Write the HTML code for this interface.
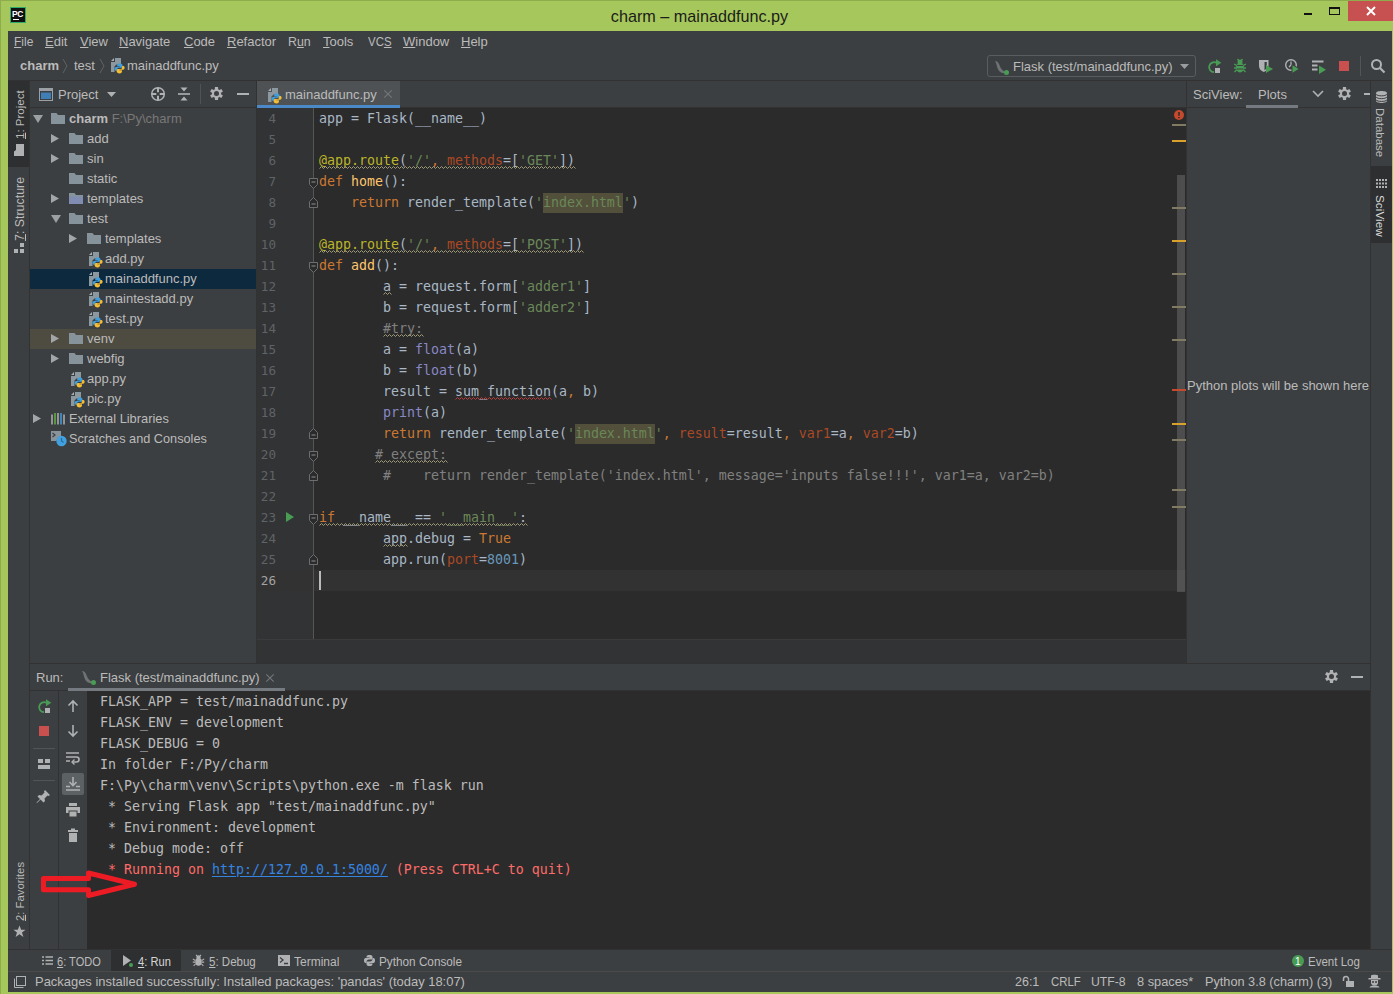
<!DOCTYPE html>
<html><head><meta charset="utf-8"><title>charm – mainaddfunc.py</title>
<style>
*{box-sizing:border-box;margin:0;padding:0}
html,body{width:1393px;height:994px;overflow:hidden}
body{background:#a6c75b;font-family:"Liberation Sans",sans-serif;font-size:13px;color:#bbbbbb;position:relative}
.abs,.abs>*{position:absolute}
.t{position:absolute;white-space:pre;line-height:20px;height:20px}
.vu{transform-origin:0 0;transform:rotate(-90deg)}
.vd{transform-origin:0 0;transform:rotate(90deg)}
.u{text-decoration:underline;text-underline-offset:1px}
svg{position:absolute;overflow:visible}
.mono{font-family:"DejaVu Sans Mono","Liberation Mono",monospace;font-size:13.29px;letter-spacing:0}
#win{position:absolute;left:8px;top:31px;width:1384px;height:961px;background:#3c3f41}
.hl{position:absolute;height:1px;background:#323232}
.vl{position:absolute;width:1px;background:#323232}
/* code */
.ln{position:absolute;left:0;width:1000px;height:21px;line-height:21px;white-space:pre;color:#a9b7c6}
.num{position:absolute;left:256px;width:20px;text-align:right;height:21px;line-height:21px;color:#606366;font-size:12.600px!important}
.k{color:#cc7832}.s{color:#6a8759}.n{color:#6897bb}.d{color:#bbb529}.b{color:#8888c6}.p{color:#aa4926}.c{color:#808080}.f{color:#ffc66d}
.hi{background:#52503a;padding:2px 0 3px}
.con{position:absolute;left:100px;height:21px;line-height:21px;white-space:pre;color:#bbbbbb}
.err{color:#ff6b68}
.row{position:absolute;left:30px;width:226px;height:20px}
</style></head><body>
<!-- window frame -->
<div style="position:absolute;left:0;top:0;width:1393px;height:1px;background:#8fac4d"></div>
<div style="position:absolute;left:0;top:0;width:1px;height:994px;background:#8fac4d"></div>
<div id="titlebar">
  <div style="position:absolute;left:10px;top:7px;width:16px;height:16px;background:#111;border:1px solid #2faa6a"></div>
  <div class="t" style="left:12px;top:9px;font-size:8.500px;font-weight:bold;color:#fff;line-height:10px;height:10px;letter-spacing:-0.300px">PC</div>
  <div style="position:absolute;left:13px;top:19px;width:6px;height:1px;background:#fff"></div>
  <div class="t" style="left:0;width:1399px;text-align:center;top:6px;font-size:16.200px;color:#1c1c1c">charm – mainaddfunc.py</div>
  <div style="position:absolute;left:1304px;top:13px;width:8px;height:2px;background:#111"></div>
  <div style="position:absolute;left:1329px;top:7px;width:11px;height:8px;border:1px solid #111;border-top-width:2px"></div>
  <div style="position:absolute;left:1348px;top:1px;width:45px;height:20px;background:#c75050"></div>
  <svg style="left:1366px;top:6px" width="10" height="10" viewBox="0 0 10 10"><path d="M1 1L9 9M9 1L1 9" stroke="#fff" stroke-width="2"/></svg>
</div>
<div id="win"></div>
<!-- MENU -->
<div id="menu">
  <div class="t" style="transform-origin:0 0;transform:scaleX(0.92);left:14px;top:32px"><span class="u">F</span>ile</div>
  <div class="t" style="left:45px;top:32px"><span class="u">E</span>dit</div>
  <div class="t" style="left:80px;top:32px"><span class="u">V</span>iew</div>
  <div class="t" style="left:119px;top:32px"><span class="u">N</span>avigate</div>
  <div class="t" style="left:184px;top:32px"><span class="u">C</span>ode</div>
  <div class="t" style="left:227px;top:32px"><span class="u">R</span>efactor</div>
  <div class="t" style="transform-origin:0 0;transform:scaleX(0.95);left:288px;top:32px">R<span class="u">u</span>n</div>
  <div class="t" style="left:323px;top:32px"><span class="u">T</span>ools</div>
  <div class="t" style="transform-origin:0 0;transform:scaleX(0.88);left:368px;top:32px">VC<span class="u">S</span></div>
  <div class="t" style="left:403px;top:32px"><span class="u">W</span>indow</div>
  <div class="t" style="left:461px;top:32px"><span class="u">H</span>elp</div>
</div>
<!-- SECTIONS -->
<!-- NAV BAR -->
<div id="nav">
  <div class="t" style="left:20px;top:56px;font-weight:bold">charm</div>
  <svg style="left:62px;top:58px" width="6" height="16" viewBox="0 0 6 16"><path d="M1 1L5 8L1 15" fill="none" stroke="#5e6366" stroke-width="1"/></svg>
  <div class="t" style="left:74px;top:56px">test</div>
  <svg style="left:99px;top:58px" width="6" height="16" viewBox="0 0 6 16"><path d="M1 1L5 8L1 15" fill="none" stroke="#5e6366" stroke-width="1"/></svg>
  <svg style="left:110px;top:57px" width="16" height="16" viewBox="0 0 16 16"><path d="M5 1H11V7.500H6.500L4.500 9.500V15H1V5H5Z" fill="#8c989f"/><path d="M1 4L4 1V4Z" fill="#a4aeb4"/><g transform="translate(4.600 6.400)"><path d="M5 0C3.500 0 2.600 0.600 2.600 1.800V3.200H5.200V3.700H1.600C0.500 3.700 0 4.600 0 5.600C0 6.800 0.600 7.400 1.600 7.400H2.500V6C2.500 5 3.300 4.300 4.300 4.300H6.600C7.400 4.300 7.900 3.700 7.900 3V1.800C7.900 0.600 6.800 0 5 0Z" fill="#3f9fdc"/><path d="M5 10C6.500 10 7.400 9.400 7.400 8.200V6.800H4.800V6.300H8.400C9.500 6.300 10 5.400 10 4.400C10 3.200 9.400 2.600 8.400 2.600H7.500V4C7.500 5 6.700 5.700 5.700 5.700H3.400C2.600 5.700 2.100 6.300 2.100 7V8.200C2.100 9.400 3.200 10 5 10Z" fill="#f5bd33"/></g></svg>
  <div class="t" style="left:127px;top:56px">mainaddfunc.py</div>
  <!-- run config -->
  <div style="position:absolute;left:987px;top:55px;width:209px;height:22px;border:1px solid #5a5d5f;border-radius:3px"></div>
  <svg style="left:993px;top:59px" width="16" height="16" viewBox="0 0 16 16"><path d="M2 2C4 2 5 3 6 5C7 7.5 8 10 10 11.5C11.5 12.5 13 13 14 13C12.5 14.5 10 14.5 8 13.5C5.5 12 4.5 9.5 4 7.5C3.6 5.5 3 3.5 2 2Z" fill="#6e7275"/><circle cx="13.5" cy="13.5" r="2.5" fill="#499c54"/></svg>
  <div class="t" style="left:1013px;top:57px">Flask (test/mainaddfunc.py)</div>
  <svg style="left:1180px;top:64px" width="9" height="5" viewBox="0 0 9 5"><path d="M0 0H9L4.5 5Z" fill="#9a9da0"/></svg>
  <!-- rerun -->
  <svg style="left:1206px;top:58px" width="16" height="16" viewBox="0 0 16 16"><path d="M10.500 4.800A5 5 0 1 0 8 14.200" fill="none" stroke="#499c54" stroke-width="1.800"/><path d="M10 1.200L15.300 4.700L10 8.200Z" fill="#499c54"/><rect x="9" y="10" width="5" height="5" fill="#afb1b3"/></svg>
  <!-- bug -->
  <svg style="left:1232px;top:58px" width="16" height="16" viewBox="0 0 16 16"><ellipse cx="8" cy="9.5" rx="4" ry="5" fill="#499c54"/><circle cx="8" cy="4" r="2.5" fill="#499c54"/><path d="M2.200 6L4.500 7.500M13.800 6L11.500 7.500M2 10H4M14 10H12M2.500 14L4.500 12M13.500 14L11.500 12M5.500 1L7 3M10.500 1L9 3" stroke="#499c54" stroke-width="1.300" fill="none"/><path d="M5 7.5H11M5 11H11" stroke="#3c3f41" stroke-width="1"/></svg>
  <!-- coverage -->
  <svg style="left:1258px;top:58px" width="16" height="16" viewBox="0 0 16 16"><path d="M1 2H10.500V8C10.500 11 8.500 13 5.800 14C3 13 1 11 1 8Z" fill="#afb1b3"/><path d="M6.500 4H8.800V8C8.800 10 8 11.300 6.500 12.200Z" fill="#3c3f41"/><path d="M8 7L15 11L8 15Z" fill="#499c54"/></svg>
  <!-- profile -->
  <svg style="left:1284px;top:58px" width="16" height="16" viewBox="0 0 16 16"><circle cx="7" cy="7" r="5.3" fill="none" stroke="#afb1b3" stroke-width="1.4"/><path d="M7 3.5V7L5 9" fill="none" stroke="#afb1b3" stroke-width="1.3"/><path d="M8 6.5L15.5 11L8 15.5Z" fill="#499c54" stroke="#3c3f41" stroke-width="1"/></svg>
  <!-- run anything -->
  <svg style="left:1311px;top:58px" width="16" height="16" viewBox="0 0 16 16"><path d="M1 3.500H12.500M1 7.500H6.500M1 11.500H6.500" stroke="#afb1b3" stroke-width="1.8"/><path d="M8 7.500L15 11.700L8 16Z" fill="#499c54"/></svg>
  <!-- stop -->
  <div style="position:absolute;left:1339px;top:61px;width:10px;height:10px;background:#c9504f"></div>
  <div class="vl" style="left:1360px;top:56px;height:20px;background:#515557"></div>
  <!-- search -->
  <svg style="left:1370px;top:58px" width="16" height="16" viewBox="0 0 16 16"><circle cx="6.5" cy="6.5" r="4.5" fill="none" stroke="#afb1b3" stroke-width="2"/><path d="M10 10L14.5 14.5" stroke="#afb1b3" stroke-width="2.2"/></svg>
  <div class="hl" style="left:8px;top:80px;width:1384px"></div>
</div>

<!-- LEFT STRIPE -->
<div id="lstripe">
  <div style="position:absolute;left:8px;top:81px;width:21px;height:86px;background:#2d2f30"></div>
  <div class="vl" style="left:29px;top:81px;height:868px"></div>
  <div class="t vu" style="left:10px;top:139px;font-size:11.500px"><span class="u">1</span>: Project</div>
  <svg style="left:13px;top:145px" width="12" height="10" viewBox="0 0 12 10"><path d="M0 0H4.500L6 2H12V10H0Z" fill="#afb1b3" transform="rotate(-90 6 5)"/></svg>
  <div class="t vu" style="left:10px;top:241px;font-size:12.400px"><span class="u">7</span>: Structure</div>
  <svg style="left:14px;top:243px" width="10" height="10" viewBox="0 0 10 10"><rect x="0" y="6" width="4" height="4" fill="#afb1b3"/><rect x="6" y="6" width="4" height="4" fill="#afb1b3"/><rect x="6" y="0" width="4" height="4" fill="#afb1b3"/></svg>
  <div class="t vu" style="left:10px;top:921px;font-size:11.300px"><span class="u">2</span>: Favorites</div>
  <svg style="left:13px;top:925px" width="13" height="13" viewBox="0 0 14 14"><path d="M7 0.500L8.800 5H13.500L9.700 8L11.200 13L7 10L2.800 13L4.300 8L0.500 5H5.200Z" fill="#afb1b3"/></svg>
</div>
<!-- RIGHT STRIPE -->
<div id="rstripe">
  <div class="vl" style="left:1370px;top:81px;height:868px"></div>
  <div style="position:absolute;left:1371px;top:166px;width:21px;height:77px;background:#2d2f30"></div>
  <svg style="left:1376px;top:91px" width="11" height="12" viewBox="0 0 11 12"><path d="M0 2.200C0 -0.700 11 -0.700 11 2.200V9.800C11 12.700 0 12.700 0 9.800Z" fill="#afb1b3"/><path d="M0 3.200C1.500 5.400 9.500 5.400 11 3.200M0 6C1.500 8.200 9.500 8.200 11 6M0 8.800C1.500 11 9.500 11 11 8.800" fill="none" stroke="#3c3f41" stroke-width="1"/></svg>
  <div class="t vd" style="left:1390px;top:108px;font-size:11.500px">Database</div>
  <svg style="left:1376px;top:179px" width="11" height="9" viewBox="0 0 11 9"><path d="M0 1H2M3 1H5M6 1H8M9 1H11M0 4.500H2M3 4.500H5M6 4.500H8M9 4.500H11M0 8H2M3 8H5M6 8H8M9 8H11" stroke="#afb1b3" stroke-width="2"/></svg>
  <div class="t vd" style="left:1390px;top:195px;font-size:11.800px;color:#d8d8d8">SciView</div>
</div>
<!-- PROJECT PANEL -->
<div id="project">
  <svg style="left:39px;top:88px" width="14" height="13" viewBox="0 0 14 13"><rect x="0.5" y="0.5" width="13" height="12" fill="none" stroke="#9aa0a4"/><rect x="0" y="0" width="14" height="3" fill="#9aa0a4"/><rect x="2" y="4.5" width="10" height="6.500" fill="#3f7fb5"/></svg>
  <div class="t" style="left:58px;top:85px">Project</div>
  <svg style="left:107px;top:92px" width="9" height="5" viewBox="0 0 9 5"><path d="M0 0H9L4.5 5Z" fill="#afb1b3"/></svg>
  <svg style="left:150px;top:86px" width="16" height="16" viewBox="0 0 16 16"><circle cx="8" cy="8" r="6.300" fill="none" stroke="#afb1b3" stroke-width="1.500"/><path d="M8 1.500V6.300M8 9.700V14.500M1.500 8H6.300M9.700 8H14.500" stroke="#afb1b3" stroke-width="2"/></svg>
  <svg style="left:176px;top:86px" width="16" height="16" viewBox="0 0 16 16"><path d="M2 8H14" stroke="#afb1b3" stroke-width="1.600"/><path d="M4.500 1.500H11.500L8 5.500Z" fill="#afb1b3"/><path d="M4.500 14.500H11.500L8 10.500Z" fill="#afb1b3"/></svg>
  <div class="vl" style="left:200px;top:84px;height:20px;background:#505355"></div>
  <svg style="left:208px;top:85px" width="17" height="17" viewBox="0 0 17 17"><path d="M6.81 4.22L6.94 1.99L10.06 1.99L10.19 4.22L11.36 4.90L13.36 3.89L14.92 6.60L13.05 7.83L13.05 9.17L14.92 10.40L13.36 13.11L11.36 12.10L10.19 12.78L10.06 15.01L6.94 15.01L6.81 12.78L5.64 12.10L3.64 13.11L2.08 10.40L3.95 9.17L3.95 7.83L2.08 6.60L3.64 3.89L5.64 4.90Z" fill="#afb1b3"/><circle cx="8.500" cy="8.500" r="2.500" fill="#3c3f41"/></svg>
  <div style="position:absolute;left:237px;top:93px;width:12px;height:2px;background:#afb1b3"></div>
  <div class="hl" style="left:30px;top:107px;width:226px"></div>
  <div class="vl" style="left:256px;top:80px;height:583px"></div>
  <svg style="left:33px;top:115px" width="10" height="8" viewBox="0 0 10 8"><path d="M0 0H10L5 8Z" fill="#9da0a2"/></svg>
  <svg style="left:51px;top:111px" width="16" height="16" viewBox="0 0 16 16"><path d="M0 2H5.500L7 4H14V13H0Z" fill="#87939a"/></svg>
  <div class="t" style="left:69px;top:109px"><b style="color:#bbbbbb">charm</b> <span style="color:#787878">F:\Py\charm</span></div>
  <svg style="left:53px;top:134px" width="8" height="9" viewBox="0 0 8 9"><path d="M-2 0L6 4.500L-2 9Z" fill="#a3a6a8"/></svg>
  <svg style="left:69px;top:131px" width="16" height="16" viewBox="0 0 16 16"><path d="M0 2H5.500L7 4H14V13H0Z" fill="#87939a"/></svg>
  <div class="t" style="left:87px;top:129px">add</div>
  <svg style="left:53px;top:154px" width="8" height="9" viewBox="0 0 8 9"><path d="M-2 0L6 4.500L-2 9Z" fill="#a3a6a8"/></svg>
  <svg style="left:69px;top:151px" width="16" height="16" viewBox="0 0 16 16"><path d="M0 2H5.500L7 4H14V13H0Z" fill="#87939a"/></svg>
  <div class="t" style="left:87px;top:149px">sin</div>
  <svg style="left:69px;top:171px" width="16" height="16" viewBox="0 0 16 16"><path d="M0 2H5.500L7 4H14V13H0Z" fill="#87939a"/></svg>
  <div class="t" style="left:87px;top:169px">static</div>
  <svg style="left:53px;top:194px" width="8" height="9" viewBox="0 0 8 9"><path d="M-2 0L6 4.500L-2 9Z" fill="#a3a6a8"/></svg>
  <svg style="left:69px;top:191px" width="16" height="16" viewBox="0 0 16 16"><path d="M0 2H5.500L7 4H14V13H0Z" fill="#87939a"/><path d="M0 5.500H14V13H0Z" fill="#7a86c4" opacity=".55"/></svg>
  <div class="t" style="left:87px;top:189px">templates</div>
  <svg style="left:51px;top:215px" width="10" height="8" viewBox="0 0 10 8"><path d="M0 0H10L5 8Z" fill="#9da0a2"/></svg>
  <svg style="left:69px;top:211px" width="16" height="16" viewBox="0 0 16 16"><path d="M0 2H5.500L7 4H14V13H0Z" fill="#87939a"/></svg>
  <div class="t" style="left:87px;top:209px">test</div>
  <svg style="left:71px;top:234px" width="8" height="9" viewBox="0 0 8 9"><path d="M-2 0L6 4.500L-2 9Z" fill="#a3a6a8"/></svg>
  <svg style="left:87px;top:231px" width="16" height="16" viewBox="0 0 16 16"><path d="M0 2H5.500L7 4H14V13H0Z" fill="#87939a"/></svg>
  <div class="t" style="left:105px;top:229px">templates</div>
  <svg style="left:88px;top:251px" width="16" height="16" viewBox="0 0 16 16"><path d="M5 1H11V7.500H6.500L4.500 9.500V15H1V5H5Z" fill="#8c989f"/><path d="M1 4L4 1V4Z" fill="#a4aeb4"/><g transform="translate(4.600 6.400)"><path d="M5 0C3.500 0 2.600 0.600 2.600 1.800V3.200H5.200V3.700H1.600C0.500 3.700 0 4.600 0 5.600C0 6.800 0.600 7.400 1.600 7.400H2.500V6C2.500 5 3.300 4.300 4.300 4.300H6.600C7.400 4.300 7.900 3.700 7.900 3V1.800C7.900 0.600 6.800 0 5 0Z" fill="#3f9fdc"/><path d="M5 10C6.500 10 7.400 9.400 7.400 8.200V6.800H4.800V6.300H8.400C9.500 6.300 10 5.400 10 4.400C10 3.200 9.400 2.600 8.400 2.600H7.500V4C7.500 5 6.700 5.700 5.700 5.700H3.400C2.600 5.700 2.100 6.300 2.100 7V8.200C2.100 9.400 3.200 10 5 10Z" fill="#f5bd33"/></g></svg>
  <div class="t" style="left:105px;top:249px">add.py</div>
  <div class="row" style="top:269px;background:#0d293e"></div>
  <svg style="left:88px;top:271px" width="16" height="16" viewBox="0 0 16 16"><path d="M5 1H11V7.500H6.500L4.500 9.500V15H1V5H5Z" fill="#8c989f"/><path d="M1 4L4 1V4Z" fill="#a4aeb4"/><g transform="translate(4.600 6.400)"><path d="M5 0C3.500 0 2.600 0.600 2.600 1.800V3.200H5.200V3.700H1.600C0.500 3.700 0 4.600 0 5.600C0 6.800 0.600 7.400 1.600 7.400H2.500V6C2.500 5 3.300 4.300 4.300 4.300H6.600C7.400 4.300 7.900 3.700 7.900 3V1.800C7.900 0.600 6.800 0 5 0Z" fill="#3f9fdc"/><path d="M5 10C6.500 10 7.400 9.400 7.400 8.200V6.800H4.800V6.300H8.400C9.500 6.300 10 5.400 10 4.400C10 3.200 9.400 2.600 8.400 2.600H7.500V4C7.500 5 6.700 5.700 5.700 5.700H3.400C2.600 5.700 2.100 6.300 2.100 7V8.200C2.100 9.400 3.200 10 5 10Z" fill="#f5bd33"/></g></svg>
  <div class="t" style="left:105px;top:269px">mainaddfunc.py</div>
  <svg style="left:88px;top:291px" width="16" height="16" viewBox="0 0 16 16"><path d="M5 1H11V7.500H6.500L4.500 9.500V15H1V5H5Z" fill="#8c989f"/><path d="M1 4L4 1V4Z" fill="#a4aeb4"/><g transform="translate(4.600 6.400)"><path d="M5 0C3.500 0 2.600 0.600 2.600 1.800V3.200H5.200V3.700H1.600C0.500 3.700 0 4.600 0 5.600C0 6.800 0.600 7.400 1.600 7.400H2.500V6C2.500 5 3.300 4.300 4.300 4.300H6.600C7.400 4.300 7.900 3.700 7.900 3V1.800C7.900 0.600 6.800 0 5 0Z" fill="#3f9fdc"/><path d="M5 10C6.500 10 7.400 9.400 7.400 8.200V6.800H4.800V6.300H8.400C9.500 6.300 10 5.400 10 4.400C10 3.200 9.400 2.600 8.400 2.600H7.500V4C7.500 5 6.700 5.700 5.700 5.700H3.400C2.600 5.700 2.100 6.300 2.100 7V8.200C2.100 9.400 3.200 10 5 10Z" fill="#f5bd33"/></g></svg>
  <div class="t" style="left:105px;top:289px">maintestadd.py</div>
  <svg style="left:88px;top:311px" width="16" height="16" viewBox="0 0 16 16"><path d="M5 1H11V7.500H6.500L4.500 9.500V15H1V5H5Z" fill="#8c989f"/><path d="M1 4L4 1V4Z" fill="#a4aeb4"/><g transform="translate(4.600 6.400)"><path d="M5 0C3.500 0 2.600 0.600 2.600 1.800V3.200H5.200V3.700H1.600C0.500 3.700 0 4.600 0 5.600C0 6.800 0.600 7.400 1.600 7.400H2.500V6C2.500 5 3.300 4.300 4.300 4.300H6.600C7.400 4.300 7.900 3.700 7.900 3V1.800C7.900 0.600 6.800 0 5 0Z" fill="#3f9fdc"/><path d="M5 10C6.500 10 7.400 9.400 7.400 8.200V6.800H4.800V6.300H8.400C9.500 6.300 10 5.400 10 4.400C10 3.200 9.400 2.600 8.400 2.600H7.500V4C7.500 5 6.700 5.700 5.700 5.700H3.400C2.600 5.700 2.100 6.300 2.100 7V8.200C2.100 9.400 3.200 10 5 10Z" fill="#f5bd33"/></g></svg>
  <div class="t" style="left:105px;top:309px">test.py</div>
  <div class="row" style="top:329px;background:#4e4b41"></div>
  <svg style="left:53px;top:334px" width="8" height="9" viewBox="0 0 8 9"><path d="M-2 0L6 4.500L-2 9Z" fill="#a3a6a8"/></svg>
  <svg style="left:69px;top:331px" width="16" height="16" viewBox="0 0 16 16"><path d="M0 2H5.500L7 4H14V13H0Z" fill="#87939a"/></svg>
  <div class="t" style="left:87px;top:329px">venv</div>
  <svg style="left:53px;top:354px" width="8" height="9" viewBox="0 0 8 9"><path d="M-2 0L6 4.500L-2 9Z" fill="#a3a6a8"/></svg>
  <svg style="left:69px;top:351px" width="16" height="16" viewBox="0 0 16 16"><path d="M0 2H5.500L7 4H14V13H0Z" fill="#87939a"/></svg>
  <div class="t" style="left:87px;top:349px">webfig</div>
  <svg style="left:70px;top:371px" width="16" height="16" viewBox="0 0 16 16"><path d="M5 1H11V7.500H6.500L4.500 9.500V15H1V5H5Z" fill="#8c989f"/><path d="M1 4L4 1V4Z" fill="#a4aeb4"/><g transform="translate(4.600 6.400)"><path d="M5 0C3.500 0 2.600 0.600 2.600 1.800V3.200H5.200V3.700H1.600C0.500 3.700 0 4.600 0 5.600C0 6.800 0.600 7.400 1.600 7.400H2.500V6C2.500 5 3.300 4.300 4.300 4.300H6.600C7.400 4.300 7.900 3.700 7.900 3V1.800C7.900 0.600 6.800 0 5 0Z" fill="#3f9fdc"/><path d="M5 10C6.500 10 7.400 9.400 7.400 8.200V6.800H4.800V6.300H8.400C9.500 6.300 10 5.400 10 4.400C10 3.200 9.400 2.600 8.400 2.600H7.500V4C7.500 5 6.700 5.700 5.700 5.700H3.400C2.600 5.700 2.100 6.300 2.100 7V8.200C2.100 9.400 3.200 10 5 10Z" fill="#f5bd33"/></g></svg>
  <div class="t" style="left:87px;top:369px">app.py</div>
  <svg style="left:70px;top:391px" width="16" height="16" viewBox="0 0 16 16"><path d="M5 1H11V7.500H6.500L4.500 9.500V15H1V5H5Z" fill="#8c989f"/><path d="M1 4L4 1V4Z" fill="#a4aeb4"/><g transform="translate(4.600 6.400)"><path d="M5 0C3.500 0 2.600 0.600 2.600 1.800V3.200H5.200V3.700H1.600C0.500 3.700 0 4.600 0 5.600C0 6.800 0.600 7.400 1.600 7.400H2.500V6C2.500 5 3.300 4.300 4.300 4.300H6.600C7.400 4.300 7.900 3.700 7.900 3V1.800C7.900 0.600 6.800 0 5 0Z" fill="#3f9fdc"/><path d="M5 10C6.500 10 7.400 9.400 7.400 8.200V6.800H4.800V6.300H8.400C9.500 6.300 10 5.400 10 4.400C10 3.200 9.400 2.600 8.400 2.600H7.500V4C7.500 5 6.700 5.700 5.700 5.700H3.400C2.600 5.700 2.100 6.300 2.100 7V8.200C2.100 9.400 3.200 10 5 10Z" fill="#f5bd33"/></g></svg>
  <div class="t" style="left:87px;top:389px">pic.py</div>
  <svg style="left:35px;top:414px" width="8" height="9" viewBox="0 0 8 9"><path d="M-2 0L6 4.500L-2 9Z" fill="#a3a6a8"/></svg>
  <svg style="left:51px;top:412px" width="16" height="14" viewBox="0 0 16 14"><path d="M1 2.500V12.500M7 1V12.500" stroke="#afb1b3" stroke-width="1.500"/><path d="M4 1V12.500" stroke="#62b543" stroke-width="1.500"/><path d="M10 1V12.500" stroke="#40a0e0" stroke-width="1.500"/><path d="M13 2.500V12.500" stroke="#afb1b3" stroke-width="1.500"/></svg>
  <div class="t" style="transform-origin:0 0;transform:scaleX(0.987);left:69px;top:409px">External Libraries</div>
  <svg style="left:51px;top:430px" width="17" height="17" viewBox="0 0 17 17"><path d="M0 1H10V6L5 11H0Z" fill="#9aa7b0" opacity=".8"/><path d="M1.500 3L4 5L1.500 7" stroke="#3c3f41" fill="none" stroke-width="1.200"/><circle cx="10.500" cy="11" r="5.200" fill="#40a0e0"/><path d="M10.500 8V11L12.500 12.500" stroke="#2b6a9b" fill="none" stroke-width="1.200"/></svg>
  <div class="t" style="transform-origin:0 0;transform:scaleX(0.978);left:69px;top:429px">Scratches and Consoles</div>
</div>
<!--PROJECT_END-->
<!-- EDITOR -->
<div id="editor">
  <div style="position:absolute;left:257px;top:81px;width:143px;height:24px;background:#4e5254"></div>
  <div style="position:absolute;left:257px;top:105px;width:143px;height:3px;z-index:2;background:#4a88c7"></div>
  <svg style="left:267px;top:87px" width="16" height="16" viewBox="0 0 16 16"><path d="M5 1H11V7.500H6.500L4.500 9.500V15H1V5H5Z" fill="#8c989f"/><path d="M1 4L4 1V4Z" fill="#a4aeb4"/><g transform="translate(4.600 6.400)"><path d="M5 0C3.500 0 2.600 0.600 2.600 1.800V3.200H5.200V3.700H1.600C0.500 3.700 0 4.600 0 5.600C0 6.800 0.600 7.400 1.600 7.400H2.500V6C2.500 5 3.300 4.300 4.300 4.300H6.600C7.400 4.300 7.900 3.700 7.900 3V1.800C7.900 0.600 6.800 0 5 0Z" fill="#3f9fdc"/><path d="M5 10C6.500 10 7.400 9.400 7.400 8.200V6.800H4.800V6.300H8.400C9.500 6.300 10 5.400 10 4.400C10 3.200 9.400 2.600 8.400 2.600H7.500V4C7.500 5 6.700 5.700 5.700 5.700H3.400C2.600 5.700 2.100 6.300 2.100 7V8.200C2.100 9.400 3.200 10 5 10Z" fill="#f5bd33"/></g></svg>
  <div class="t" style="left:285px;top:85px">mainaddfunc.py</div>
  <svg style="left:384px;top:90px" width="8" height="8" viewBox="0 0 8 8"><path d="M0.300 0.300L7.700 7.700M7.700 0.300L0.300 7.700" stroke="#73777a" stroke-width="1.100"/></svg>
  <div class="hl" style="left:257px;top:107px;width:930px"></div>
  <div style="position:absolute;left:257px;top:108px;width:930px;height:555px;background:#2b2b2b"></div>
  <div style="position:absolute;left:257px;top:108px;width:56px;height:531px;background:#313335"></div>
  <div style="position:absolute;left:257px;top:640px;width:930px;height:23px;background:#313335"></div>
  <div style="position:absolute;left:257px;top:570px;width:929px;height:21px;background:#323232"></div>
  <div class="vl" style="left:313px;top:108px;height:531px;background:#555555"></div>
  <div class="hl" style="left:257px;top:639px;width:930px;background:#3b3b3b"></div>
  <div class="num mono" style="top:108px">4</div>
  <div class="ln mono" style="left:319px;top:108px">app = Flask(__name__)</div>
  <div class="num mono" style="top:129px">5</div>
  <div class="num mono" style="top:150px">6</div>
  <div class="ln mono" style="left:319px;top:150px"><span class="w"><span class="d">@app.route</span>(<span class="s">'/'</span><span class="k">,</span> <span class="p">methods</span>=[<span class="s">'GET'</span>])</span></div>
  <div class="num mono" style="top:171px">7</div>
  <div class="ln mono" style="left:319px;top:171px"><span class="k">def </span><span class="f">home</span>():</div>
  <div class="num mono" style="top:192px">8</div>
  <div class="ln mono" style="left:319px;top:192px">    <span class="k">return </span>render_template(<span class="s">'<span class="hi">index.html</span>'</span>)</div>
  <div class="num mono" style="top:213px">9</div>
  <div class="num mono" style="top:234px">10</div>
  <div class="ln mono" style="left:319px;top:234px"><span class="w"><span class="d">@app.route</span>(<span class="s">'/'</span><span class="k">,</span> <span class="p">methods</span>=[<span class="s">'POST'</span>])</span></div>
  <div class="num mono" style="top:255px">11</div>
  <div class="ln mono" style="left:319px;top:255px"><span class="k">def </span><span class="f">add</span>():</div>
  <div class="num mono" style="top:276px">12</div>
  <div class="ln mono" style="left:319px;top:276px">        <span class="w">a</span> = request.form[<span class="s">'adder1'</span>]</div>
  <div class="num mono" style="top:297px">13</div>
  <div class="ln mono" style="left:319px;top:297px">        b = request.form[<span class="s">'adder2'</span>]</div>
  <div class="num mono" style="top:318px">14</div>
  <div class="ln mono" style="left:319px;top:318px">        <span class="c w">#try:</span></div>
  <div class="num mono" style="top:339px">15</div>
  <div class="ln mono" style="left:319px;top:339px">        a = <span class="b">float</span>(a)</div>
  <div class="num mono" style="top:360px">16</div>
  <div class="ln mono" style="left:319px;top:360px">        b = <span class="b">float</span>(b)</div>
  <div class="num mono" style="top:381px">17</div>
  <div class="ln mono" style="left:319px;top:381px">        result = <span class="wr">sum_function</span>(a<span class="k">,</span> b)</div>
  <div class="num mono" style="top:402px">18</div>
  <div class="ln mono" style="left:319px;top:402px">        <span class="b">print</span>(a)</div>
  <div class="num mono" style="top:423px">19</div>
  <div class="ln mono" style="left:319px;top:423px">        <span class="k">return </span>render_template(<span class="s">'<span class="hi">index.html</span>'</span><span class="k">,</span> <span class="p">result</span>=result<span class="k">,</span> <span class="p">var1</span>=a<span class="k">,</span> <span class="p">var2</span>=b)</div>
  <div class="num mono" style="top:444px">20</div>
  <div class="ln mono" style="left:319px;top:444px">       <span class="c w"># except:</span></div>
  <div class="num mono" style="top:465px">21</div>
  <div class="ln mono" style="left:319px;top:465px">        <span class="c">#    return render_template('index.html', message='inputs false!!!', var1=a, var2=b)</span></div>
  <div class="num mono" style="top:486px">22</div>
  <div class="num mono" style="top:507px">23</div>
  <div class="ln mono" style="left:319px;top:507px"><span class="w"><span class="k">if </span>__name__ == <span class="s">'__main__'</span>:</span></div>
  <div class="num mono" style="top:528px">24</div>
  <div class="ln mono" style="left:319px;top:528px">        <span class="w">app</span>.debug = <span class="k">True</span></div>
  <div class="num mono" style="top:549px">25</div>
  <div class="ln mono" style="left:319px;top:549px">        app.run(<span class="p">port</span>=<span class="n">8001</span>)</div>
  <div class="num mono" style="top:570px;color:#a4a3a3">26</div>
  <svg style="left:309px;top:178px" width="9" height="11" viewBox="0 0 9 11"><path d="M0.500 0.500H8.500V6.500L4.500 10.500L0.500 6.500Z" fill="#2b2b2b" stroke="#6c6f72"/><path d="M2.500 4H6.500" stroke="#8c8f91"/></svg>
  <svg style="left:309px;top:262px" width="9" height="11" viewBox="0 0 9 11"><path d="M0.500 0.500H8.500V6.500L4.500 10.500L0.500 6.500Z" fill="#2b2b2b" stroke="#6c6f72"/><path d="M2.500 4H6.500" stroke="#8c8f91"/></svg>
  <svg style="left:309px;top:451px" width="9" height="11" viewBox="0 0 9 11"><path d="M0.500 0.500H8.500V6.500L4.500 10.500L0.500 6.500Z" fill="#2b2b2b" stroke="#6c6f72"/><path d="M2.500 4H6.500" stroke="#8c8f91"/></svg>
  <svg style="left:309px;top:514px" width="9" height="11" viewBox="0 0 9 11"><path d="M0.500 0.500H8.500V6.500L4.500 10.500L0.500 6.500Z" fill="#2b2b2b" stroke="#6c6f72"/><path d="M2.500 4H6.500" stroke="#8c8f91"/></svg>
  <svg style="left:309px;top:197px" width="9" height="11" viewBox="0 0 9 11"><path d="M0.500 10.500H8.500V4.500L4.500 0.500L0.500 4.500Z" fill="#2b2b2b" stroke="#6c6f72"/><path d="M2.500 7H6.500" stroke="#8c8f91"/></svg>
  <svg style="left:309px;top:428px" width="9" height="11" viewBox="0 0 9 11"><path d="M0.500 10.500H8.500V4.500L4.500 0.500L0.500 4.500Z" fill="#2b2b2b" stroke="#6c6f72"/><path d="M2.500 7H6.500" stroke="#8c8f91"/></svg>
  <svg style="left:309px;top:470px" width="9" height="11" viewBox="0 0 9 11"><path d="M0.500 10.500H8.500V4.500L4.500 0.500L0.500 4.500Z" fill="#2b2b2b" stroke="#6c6f72"/><path d="M2.500 7H6.500" stroke="#8c8f91"/></svg>
  <svg style="left:309px;top:554px" width="9" height="11" viewBox="0 0 9 11"><path d="M0.500 10.500H8.500V4.500L4.500 0.500L0.500 4.500Z" fill="#2b2b2b" stroke="#6c6f72"/><path d="M2.500 7H6.500" stroke="#8c8f91"/></svg>
  <svg style="left:286px;top:512px" width="8" height="10" viewBox="0 0 8 10"><path d="M0 0L8 5L0 10Z" fill="#499c54"/></svg>
  <svg style="left:0;top:0" width="700" height="600" viewBox="0 0 700 600" fill="none" stroke-width="1"><path d="M319.5 168.5L321.5 166.5L323.5 168.5L325.5 166.5L327.5 168.5L329.5 166.5L331.5 168.5L333.5 166.5L335.5 168.5L337.5 166.5L339.5 168.5L341.5 166.5L343.5 168.5L345.5 166.5L347.5 168.5L349.5 166.5L351.5 168.5L353.5 166.5L355.5 168.5L357.5 166.5L359.5 168.5L361.5 166.5L363.5 168.5L365.5 166.5L367.5 168.5L369.5 166.5L371.5 168.5L373.5 166.5L375.5 168.5L377.5 166.5L379.5 168.5L381.5 166.5L383.5 168.5L385.5 166.5L387.5 168.5L389.5 166.5L391.5 168.5L393.5 166.5L395.5 168.5L397.5 166.5L399.5 168.5L401.5 166.5L403.5 168.5L405.5 166.5L407.5 168.5L409.5 166.5L411.5 168.5L413.5 166.5L415.5 168.5L417.5 166.5L419.5 168.5L421.5 166.5L423.5 168.5L425.5 166.5L427.5 168.5L429.5 166.5L431.5 168.5L433.5 166.5L435.5 168.5L437.5 166.5L439.5 168.5L441.5 166.5L443.5 168.5L445.5 166.5L447.5 168.5L449.5 166.5L451.5 168.5L453.5 166.5L455.5 168.5L457.5 166.5L459.5 168.5L461.5 166.5L463.5 168.5L465.5 166.5L467.5 168.5L469.5 166.5L471.5 168.5L473.5 166.5L475.5 168.5L477.5 166.5L479.5 168.5L481.5 166.5L483.5 168.5L485.5 166.5L487.5 168.5L489.5 166.5L491.5 168.5L493.5 166.5L495.5 168.5L497.5 166.5L499.5 168.5L501.5 166.5L503.5 168.5L505.5 166.5L507.5 168.5L509.5 166.5L511.5 168.5L513.5 166.5L515.5 168.5L517.5 166.5L519.5 168.5L521.5 166.5L523.5 168.5L525.5 166.5L527.5 168.5L529.5 166.5L531.5 168.5L533.5 166.5L535.5 168.5L537.5 166.5L539.5 168.5L541.5 166.5L543.5 168.5L545.5 166.5L547.5 168.5L549.5 166.5L551.5 168.5L553.5 166.5L555.5 168.5L557.5 166.5L559.5 168.5L561.5 166.5L563.5 168.5L565.5 166.5L567.5 168.5L569.5 166.5L571.5 168.5L573.5 166.5L575.5 168.5" stroke="#a09b78"/><path d="M319.5 252.5L321.5 250.5L323.5 252.5L325.5 250.5L327.5 252.5L329.5 250.5L331.5 252.5L333.5 250.5L335.5 252.5L337.5 250.5L339.5 252.5L341.5 250.5L343.5 252.5L345.5 250.5L347.5 252.5L349.5 250.5L351.5 252.5L353.5 250.5L355.5 252.5L357.5 250.5L359.5 252.5L361.5 250.5L363.5 252.5L365.5 250.5L367.5 252.5L369.5 250.5L371.5 252.5L373.5 250.5L375.5 252.5L377.5 250.5L379.5 252.5L381.5 250.5L383.5 252.5L385.5 250.5L387.5 252.5L389.5 250.5L391.5 252.5L393.5 250.5L395.5 252.5L397.5 250.5L399.5 252.5L401.5 250.5L403.5 252.5L405.5 250.5L407.5 252.5L409.5 250.5L411.5 252.5L413.5 250.5L415.5 252.5L417.5 250.5L419.5 252.5L421.5 250.5L423.5 252.5L425.5 250.5L427.5 252.5L429.5 250.5L431.5 252.5L433.5 250.5L435.5 252.5L437.5 250.5L439.5 252.5L441.5 250.5L443.5 252.5L445.5 250.5L447.5 252.5L449.5 250.5L451.5 252.5L453.5 250.5L455.5 252.5L457.5 250.5L459.5 252.5L461.5 250.5L463.5 252.5L465.5 250.5L467.5 252.5L469.5 250.5L471.5 252.5L473.5 250.5L475.5 252.5L477.5 250.5L479.5 252.5L481.5 250.5L483.5 252.5L485.5 250.5L487.5 252.5L489.5 250.5L491.5 252.5L493.5 250.5L495.5 252.5L497.5 250.5L499.5 252.5L501.5 250.5L503.5 252.5L505.5 250.5L507.5 252.5L509.5 250.5L511.5 252.5L513.5 250.5L515.5 252.5L517.5 250.5L519.5 252.5L521.5 250.5L523.5 252.5L525.5 250.5L527.5 252.5L529.5 250.5L531.5 252.5L533.5 250.5L535.5 252.5L537.5 250.5L539.5 252.5L541.5 250.5L543.5 252.5L545.5 250.5L547.5 252.5L549.5 250.5L551.5 252.5L553.5 250.5L555.5 252.5L557.5 250.5L559.5 252.5L561.5 250.5L563.5 252.5L565.5 250.5L567.5 252.5L569.5 250.5L571.5 252.5L573.5 250.5L575.5 252.5L577.5 250.5L579.5 252.5L581.5 250.5L583.5 252.5" stroke="#a09b78"/><path d="M383.5 294.5L385.5 292.5L387.5 294.5L389.5 292.5L391.5 294.5" stroke="#a09b78"/><path d="M383.5 336.5L385.5 334.5L387.5 336.5L389.5 334.5L391.5 336.5L393.5 334.5L395.5 336.5L397.5 334.5L399.5 336.5L401.5 334.5L403.5 336.5L405.5 334.5L407.5 336.5L409.5 334.5L411.5 336.5L413.5 334.5L415.5 336.5L417.5 334.5L419.5 336.5L421.5 334.5L423.5 336.5" stroke="#a09b78"/><path d="M455.5 399.5L457.5 397.5L459.5 399.5L461.5 397.5L463.5 399.5L465.5 397.5L467.5 399.5L469.5 397.5L471.5 399.5L473.5 397.5L475.5 399.5L477.5 397.5L479.5 399.5L481.5 397.5L483.5 399.5L485.5 397.5L487.5 399.5L489.5 397.5L491.5 399.5L493.5 397.5L495.5 399.5L497.5 397.5L499.5 399.5L501.5 397.5L503.5 399.5L505.5 397.5L507.5 399.5L509.5 397.5L511.5 399.5L513.5 397.5L515.5 399.5L517.5 397.5L519.5 399.5L521.5 397.5L523.5 399.5L525.5 397.5L527.5 399.5L529.5 397.5L531.5 399.5L533.5 397.5L535.5 399.5L537.5 397.5L539.5 399.5L541.5 397.5L543.5 399.5L545.5 397.5L547.5 399.5L549.5 397.5L551.5 399.5" stroke="#bc3f3c"/><path d="M375.5 462.5L377.5 460.5L379.5 462.5L381.5 460.5L383.5 462.5L385.5 460.5L387.5 462.5L389.5 460.5L391.5 462.5L393.5 460.5L395.5 462.5L397.5 460.5L399.5 462.5L401.5 460.5L403.5 462.5L405.5 460.5L407.5 462.5L409.5 460.5L411.5 462.5L413.5 460.5L415.5 462.5L417.5 460.5L419.5 462.5L421.5 460.5L423.5 462.5L425.5 460.5L427.5 462.5L429.5 460.5L431.5 462.5L433.5 460.5L435.5 462.5L437.5 460.5L439.5 462.5L441.5 460.5L443.5 462.5L445.5 460.5L447.5 462.5" stroke="#a09b78"/><path d="M319.5 525.5L321.5 523.5L323.5 525.5L325.5 523.5L327.5 525.5L329.5 523.5L331.5 525.5L333.5 523.5L335.5 525.5L337.5 523.5L339.5 525.5L341.5 523.5L343.5 525.5L345.5 523.5L347.5 525.5L349.5 523.5L351.5 525.5L353.5 523.5L355.5 525.5L357.5 523.5L359.5 525.5L361.5 523.5L363.5 525.5L365.5 523.5L367.5 525.5L369.5 523.5L371.5 525.5L373.5 523.5L375.5 525.5L377.5 523.5L379.5 525.5L381.5 523.5L383.5 525.5L385.5 523.5L387.5 525.5L389.5 523.5L391.5 525.5L393.5 523.5L395.5 525.5L397.5 523.5L399.5 525.5L401.5 523.5L403.5 525.5L405.5 523.5L407.5 525.5L409.5 523.5L411.5 525.5L413.5 523.5L415.5 525.5L417.5 523.5L419.5 525.5L421.5 523.5L423.5 525.5L425.5 523.5L427.5 525.5L429.5 523.5L431.5 525.5L433.5 523.5L435.5 525.5L437.5 523.5L439.5 525.5L441.5 523.5L443.5 525.5L445.5 523.5L447.5 525.5L449.5 523.5L451.5 525.5L453.5 523.5L455.5 525.5L457.5 523.5L459.5 525.5L461.5 523.5L463.5 525.5L465.5 523.5L467.5 525.5L469.5 523.5L471.5 525.5L473.5 523.5L475.5 525.5L477.5 523.5L479.5 525.5L481.5 523.5L483.5 525.5L485.5 523.5L487.5 525.5L489.5 523.5L491.5 525.5L493.5 523.5L495.5 525.5L497.5 523.5L499.5 525.5L501.5 523.5L503.5 525.5L505.5 523.5L507.5 525.5L509.5 523.5L511.5 525.5L513.5 523.5L515.5 525.5L517.5 523.5L519.5 525.5L521.5 523.5L523.5 525.5L525.5 523.5L527.5 525.5" stroke="#a09b78"/><path d="M383.5 546.5L385.5 544.5L387.5 546.5L389.5 544.5L391.5 546.5L393.5 544.5L395.5 546.5L397.5 544.5L399.5 546.5L401.5 544.5L403.5 546.5L405.5 544.5L407.5 546.5" stroke="#a09b78"/></svg>
  <div style="position:absolute;left:319px;top:571px;width:2px;height:19px;background:#bbbbbb"></div>
  <div style="position:absolute;left:1177px;top:175px;width:8px;height:417px;background:rgba(255,255,255,.16)"></div>
  <svg style="left:1174px;top:110px" width="10" height="10" viewBox="0 0 10 10"><circle cx="5" cy="5" r="5" fill="#c5492d"/><path d="M5 2V5.800M5 7V8.300" stroke="#2b2b2b" stroke-width="1.500"/></svg>
  <div style="position:absolute;left:1172px;top:124px;width:14px;height:2px;background:#807b62"></div>
  <div style="position:absolute;left:1172px;top:140px;width:14px;height:2px;background:#d9a12c"></div>
  <div style="position:absolute;left:1172px;top:207px;width:14px;height:2px;background:#807b62"></div>
  <div style="position:absolute;left:1172px;top:240px;width:14px;height:2px;background:#d9a12c"></div>
  <div style="position:absolute;left:1172px;top:273px;width:14px;height:2px;background:#807b62"></div>
  <div style="position:absolute;left:1172px;top:306px;width:14px;height:2px;background:#807b62"></div>
  <div style="position:absolute;left:1172px;top:339px;width:14px;height:2px;background:#807b62"></div>
  <div style="position:absolute;left:1172px;top:389px;width:14px;height:2px;background:#c5492d"></div>
  <div style="position:absolute;left:1172px;top:423px;width:14px;height:2px;background:#d9a12c"></div>
  <div style="position:absolute;left:1172px;top:439px;width:14px;height:2px;background:#807b62"></div>
  <div style="position:absolute;left:1172px;top:489px;width:14px;height:2px;background:#807b62"></div>
  <div style="position:absolute;left:1172px;top:506px;width:14px;height:2px;background:#807b62"></div>
</div>
<!--EDITOR_END-->
<!-- SCIVIEW -->
<div id="sciview">
  <div class="vl" style="left:1186px;top:80px;height:583px"></div>
  <div class="t" style="left:1193px;top:85px">SciView:</div>
  <div class="t" style="left:1258px;top:85px">Plots</div>
  <div style="position:absolute;left:1246px;top:105px;width:52px;height:3px;z-index:2;background:#747a80"></div>
  <svg style="left:1312px;top:90px" width="12" height="8" viewBox="0 0 12 8"><path d="M1 1L6 6L11 1" fill="none" stroke="#afb1b3" stroke-width="1.600"/></svg>
  <svg style="left:1336px;top:85px" width="17" height="17" viewBox="0 0 17 17"><path d="M6.81 4.22L6.94 1.99L10.06 1.99L10.19 4.22L11.36 4.90L13.36 3.89L14.92 6.60L13.05 7.83L13.05 9.17L14.92 10.40L13.36 13.11L11.36 12.10L10.19 12.78L10.06 15.01L6.94 15.01L6.81 12.78L5.64 12.10L3.64 13.11L2.08 10.40L3.95 9.17L3.95 7.83L2.08 6.60L3.64 3.89L5.64 4.90Z" fill="#afb1b3"/><circle cx="8.500" cy="8.500" r="2.500" fill="#3c3f41"/></svg>
  <div style="position:absolute;left:1364px;top:93px;width:6px;height:2px;background:#afb1b3"></div>
  <div class="hl" style="left:1187px;top:107px;width:183px"></div>
  <div class="t" style="left:1187px;top:376px">Python plots will be shown here</div>
</div>

<!-- RUN PANEL -->
<div id="runpanel">
  <div class="hl" style="left:30px;top:663px;width:1340px"></div>
  <div class="t" style="left:36px;top:668px">Run:</div>
  <svg style="left:80px;top:669px" width="16" height="16" viewBox="0 0 16 16"><path d="M2 2C4 2 5 3 6 5C7 7.5 8 10 10 11.5C11.5 12.5 13 13 14 13C12.5 14.5 10 14.5 8 13.5C5.5 12 4.5 9.5 4 7.5C3.6 5.5 3 3.5 2 2Z" fill="#6e7275"/><circle cx="13.5" cy="13.5" r="2.5" fill="#499c54"/></svg>
  <div class="t" style="left:100px;top:668px">Flask (test/mainaddfunc.py)</div>
  <svg style="left:266px;top:674px" width="8" height="8" viewBox="0 0 8 8"><path d="M0.300 0.300L7.700 7.700M7.700 0.300L0.300 7.700" stroke="#73777a" stroke-width="1.100"/></svg>
  <div style="position:absolute;left:68px;top:688px;width:217px;height:3px;z-index:2;background:#747a80"></div>
  <svg style="left:1323px;top:668px" width="17" height="17" viewBox="0 0 17 17"><path d="M6.81 4.22L6.94 1.99L10.06 1.99L10.19 4.22L11.36 4.90L13.36 3.89L14.92 6.60L13.05 7.83L13.05 9.17L14.92 10.40L13.36 13.11L11.36 12.10L10.19 12.78L10.06 15.01L6.94 15.01L6.81 12.78L5.64 12.10L3.64 13.11L2.08 10.40L3.95 9.17L3.95 7.83L2.08 6.60L3.64 3.89L5.64 4.90Z" fill="#afb1b3"/><circle cx="8.500" cy="8.500" r="2.500" fill="#3c3f41"/></svg>
  <div style="position:absolute;left:1351px;top:676px;width:12px;height:2px;background:#afb1b3"></div>
  <div class="hl" style="left:30px;top:690px;width:1340px"></div>
  <!-- console -->
  <div style="position:absolute;left:87px;top:691px;width:1283px;height:258px;background:#2b2b2b"></div>
  <div class="vl" style="left:58px;top:691px;height:258px"></div>
  <div class="con mono" style="top:691px">FLASK_APP = test/mainaddfunc.py</div>
  <div class="con mono" style="top:712px">FLASK_ENV = development</div>
  <div class="con mono" style="top:733px">FLASK_DEBUG = 0</div>
  <div class="con mono" style="top:754px">In folder F:/Py/charm</div>
  <div class="con mono" style="top:775px">F:\Py\charm\venv\Scripts\python.exe -m flask run</div>
  <div class="con mono" style="top:796px"> * Serving Flask app "test/mainaddfunc.py"</div>
  <div class="con mono" style="top:817px"> * Environment: development</div>
  <div class="con mono" style="top:838px"> * Debug mode: off</div>
  <div class="con mono err" style="top:859px"> * Running on <span style="color:#3584e0;text-decoration:underline;text-underline-offset:2px">http://127.0.0.1:5000/</span> (Press CTRL+C to quit)</div>
  <!-- col1 icons -->
  <svg style="left:36px;top:698px" width="16" height="16" viewBox="0 0 16 16"><path d="M10.500 4.800A5 5 0 1 0 8 14.200" fill="none" stroke="#499c54" stroke-width="1.800"/><path d="M10 1.200L15.300 4.700L10 8.200Z" fill="#499c54"/><rect x="9" y="10" width="5" height="5" fill="#afb1b3"/></svg>
  <div style="position:absolute;left:39px;top:726px;width:10px;height:10px;background:#c9504f"></div>
  <div class="hl" style="left:33px;top:748px;width:22px;background:#515557"></div>
  <svg style="left:38px;top:759px" width="12" height="10" viewBox="0 0 12 10"><rect x="0" y="0" width="5" height="4" fill="#afb1b3"/><rect x="7" y="0" width="5" height="4" fill="#afb1b3"/><rect x="0" y="6" width="12" height="4" fill="#afb1b3"/></svg>
  <div class="hl" style="left:33px;top:780px;width:22px;background:#515557"></div>
  <svg style="left:36px;top:789px" width="15" height="15" viewBox="0 0 15 15"><path d="M9 1L14 6L12.500 7L11.500 6.500L8.500 9.500L9 12L7.500 13.500L4.500 10.500L1 14L0.500 13.500L4 10L1.500 7.500L3 6L5.500 6.500L8.500 3.500L8 2.500Z" fill="#afb1b3"/></svg>
  <!-- col2 icons -->
  <svg style="left:66px;top:699px" width="14" height="14" viewBox="0 0 14 14"><path d="M7 13V2M2.500 6.500L7 2L11.500 6.500" fill="none" stroke="#afb1b3" stroke-width="1.600"/></svg>
  <svg style="left:66px;top:724px" width="14" height="14" viewBox="0 0 14 14"><path d="M7 1V12M2.500 7.500L7 12L11.500 7.500" fill="none" stroke="#afb1b3" stroke-width="1.600"/></svg>
  <svg style="left:65px;top:750px" width="16" height="16" viewBox="0 0 16 16"><path d="M1 3H14M1 7H11.500A2.500 2.500 0 0 1 11.500 12H8M1 11H5" fill="none" stroke="#afb1b3" stroke-width="1.600"/><path d="M9.500 9.500L7 12L9.500 14.500" fill="none" stroke="#afb1b3" stroke-width="1.400"/></svg>
  <div style="position:absolute;left:62px;top:773px;width:22px;height:22px;background:#5c6164;border-radius:2px"></div>
  <svg style="left:65px;top:776px" width="16" height="16" viewBox="0 0 16 16"><path d="M1 14H15M1 10.500H5M11 10.500H15" stroke="#afb1b3" stroke-width="1.600"/><path d="M8 1V9M4.500 6L8 9.500L11.500 6" fill="none" stroke="#afb1b3" stroke-width="1.600"/></svg>
  <svg style="left:65px;top:802px" width="16" height="16" viewBox="0 0 16 16"><rect x="4" y="1" width="8" height="3" fill="#afb1b3"/><rect x="1" y="5" width="14" height="6" fill="#afb1b3"/><rect x="4" y="9" width="8" height="6" fill="#afb1b3" stroke="#3c3f41"/></svg>
  <svg style="left:66px;top:827px" width="14" height="16" viewBox="0 0 14 16"><path d="M2 3H12V5H2ZM5 1.500H9V3H5ZM3 6H11V15H3Z" fill="#afb1b3"/></svg>
  <!-- red arrow annotation -->
  <svg style="left:0;top:0" width="150" height="910" viewBox="0 0 150 910"><path d="M43.500 878.500H88.500V873L134.500 884.300L88.500 895.500V889.700H43.500Z" fill="none" stroke="#ed1c24" stroke-width="5" stroke-linejoin="round"/></svg>
</div>

<!-- BOTTOM STRIPE + STATUS -->
<div id="bottom">
  <div class="hl" style="left:8px;top:949px;width:1384px"></div>
  <div style="position:absolute;left:111px;top:950px;width:70px;height:21px;background:#2d2f30"></div>
  <svg style="left:42px;top:956px" width="11" height="9" viewBox="0 0 11 9"><path d="M0 1H2M3.500 1H11M0 4.500H2M3.500 4.500H11M0 8H2M3.500 8H11" stroke="#afb1b3" stroke-width="1.600"/></svg>
  <div class="t" style="transform-origin:0 0;transform:scaleX(0.92);left:57px;top:952px;font-size:12px"><span class="u">6</span>: TODO</div>
  <svg style="left:123px;top:955px" width="10" height="12" viewBox="0 0 10 12"><path d="M0 0L8 5.500L0 11Z" fill="#afb1b3"/><circle cx="8" cy="10" r="2" fill="#499c54"/></svg>
  <div class="t" style="transform-origin:0 0;transform:scaleX(0.93);left:138px;top:952px;font-size:12px;color:#d5d5d5"><span class="u">4</span>: Run</div>
  <svg style="left:192px;top:954px" width="13" height="13" viewBox="0 0 16 16"><ellipse cx="8" cy="9.500" rx="4" ry="5" fill="#afb1b3"/><circle cx="8" cy="4" r="2.500" fill="#afb1b3"/><path d="M1 6L4 8M15 6L12 8M1 10H4M15 10H12M2 14.500L4.500 12M14 14.500L11.500 12M5 1L6.500 3M11 1L9.500 3" stroke="#afb1b3" stroke-width="1.300" fill="none"/></svg>
  <div class="t" style="transform-origin:0 0;transform:scaleX(0.96);left:209px;top:952px;font-size:12px"><span class="u">5</span>: Debug</div>
  <svg style="left:278px;top:955px" width="12" height="11" viewBox="0 0 12 11"><rect x="0" y="0" width="12" height="11" fill="#afb1b3"/><path d="M2 2.500L5 5L2 7.500M6 8.500H10" fill="none" stroke="#3c3f41" stroke-width="1.300"/></svg>
  <div class="t" style="left:294px;top:952px;font-size:12px">Terminal</div>
  <svg style="left:363px;top:954px" width="13" height="13" viewBox="0 0 13 13"><path d="M3.500 3C3.500 1.500 4.500 1 6.500 1C8.500 1 9.500 1.500 9.500 3V5.500H6C4.500 5.500 3.500 6.500 3.500 8V9H2.500C1.500 9 1 8 1 6.500C1 5 1.500 4 2.500 4H6.500V3.500H3.500Z" fill="#afb1b3"/><path d="M9.500 10C9.500 11.500 8.500 12 6.500 12C4.500 12 3.500 11.500 3.500 10V7.500H7C8.500 7.500 9.500 6.500 9.500 5V4H10.500C11.500 4 12 5 12 6.500C12 8 11.500 9 10.500 9H6.500V9.500H9.500Z" fill="#afb1b3"/></svg>
  <div class="t" style="transform-origin:0 0;transform:scaleX(0.98);left:379px;top:952px;font-size:12px">Python Console</div>
  <div style="position:absolute;left:1292px;top:955px;width:12px;height:12px;border-radius:6px;background:#499c54"></div>
  <div class="t" style="left:1295px;top:952px;font-size:10px;color:#fff">1</div>
  <div class="t" style="transform-origin:0 0;transform:scaleX(0.96);left:1308px;top:952px;font-size:12px">Event Log</div>
  <div class="hl" style="left:8px;top:971px;width:1384px;background:#4a4a48"></div>
  <svg style="left:14px;top:976px" width="12" height="12" viewBox="0 0 12 12"><rect x="2.500" y="0.500" width="9" height="9" fill="none" stroke="#afb1b3"/><path d="M0.500 2.500V11.500H9.500" fill="none" stroke="#afb1b3"/></svg>
  <div class="t" style="transform-origin:0 0;transform:scaleX(0.995);left:35px;top:972px">Packages installed successfully: Installed packages: 'pandas' (today 18:07)</div>
  <div class="t" style="transform-origin:0 0;transform:scaleX(0.96);left:1015px;top:972px">26:1</div>
  <div class="t" style="transform-origin:0 0;transform:scaleX(0.875);left:1051px;top:972px">CRLF</div>
  <div class="t" style="transform-origin:0 0;transform:scaleX(0.94);left:1091px;top:972px">UTF-8</div>
  <div class="t" style="transform-origin:0 0;transform:scaleX(0.985);left:1137px;top:972px">8 spaces*</div>
  <div class="t" style="transform-origin:0 0;transform:scaleX(0.978);left:1205px;top:972px">Python 3.8 (charm) (3)</div>
  <svg style="left:1342px;top:975px" width="13" height="13" viewBox="0 0 13 13"><rect x="4" y="6" width="8" height="6" fill="#afb1b3"/><path d="M1.500 6V4A2.500 2.500 0 0 1 6.500 4V6" fill="none" stroke="#afb1b3" stroke-width="1.500"/></svg>
  <svg style="left:1368px;top:974px" width="13" height="14" viewBox="0 0 13 14"><path d="M3 1.500C3 0.500 10 0.500 10 1.500V4H3Z" fill="#afb1b3"/><rect x="0.500" y="4" width="12" height="1.500" fill="#afb1b3"/><path d="M3 6H10V9C10 10.500 8.500 11.500 6.500 11.500C4.500 11.500 3 10.500 3 9Z" fill="#afb1b3"/><circle cx="5" cy="8" r="1" fill="#3c3f41"/><circle cx="8" cy="8" r="1" fill="#3c3f41"/><path d="M1.500 13.500C2 12 4 11.500 6.500 11.500C9 11.500 11 12 11.500 13.500Z" fill="#afb1b3"/></svg>
</div>

</body></html>
